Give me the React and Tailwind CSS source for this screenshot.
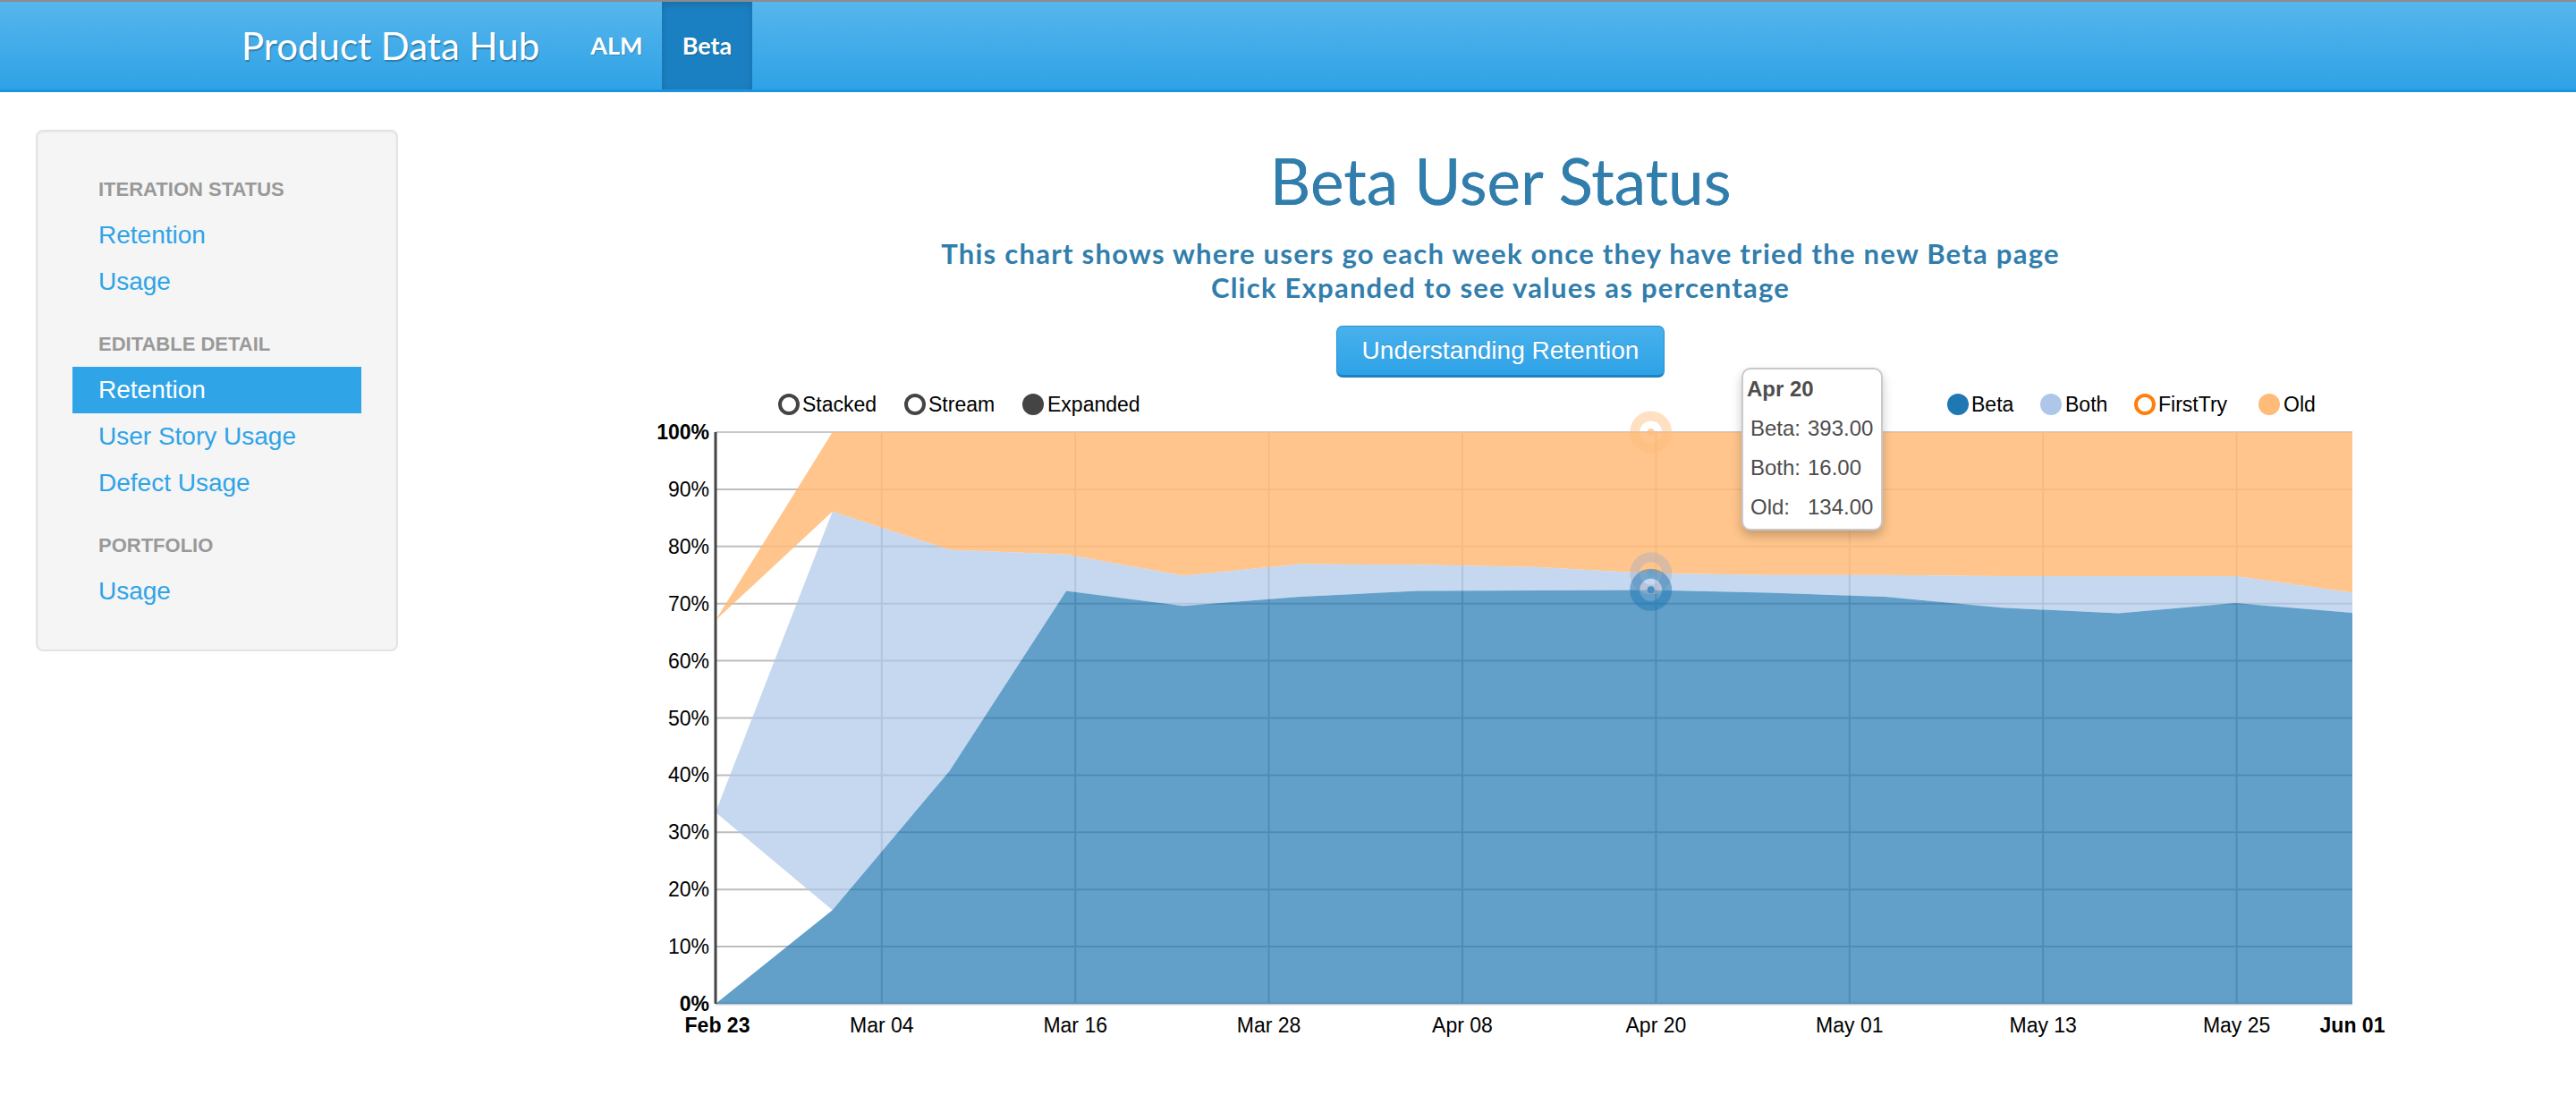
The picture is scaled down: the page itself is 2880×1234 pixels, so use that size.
import React from "react";

const X0 = 100;
const STEP = 130.714;
const xs = (i) => X0 + i * STEP;
const yy = (p) => 692 - p * 6.39;

const betaTop = [0, 16.4, 40.7, 72.2, 69.6, 71.2, 72.2, 72.3, 72.4, 71.9, 71.2, 69.3, 68.3, 70.1, 68.4];
const bothTop = [33.5, 86.1, 79.4, 78.6, 74.9, 76.9, 76.8, 76.4, 75.3, 75.0, 75.0, 74.8, 74.8, 74.8, 71.9];
const oldTop = [67.1, 100, 100, 100, 100, 100, 100, 100, 100, 100, 100, 100, 100, 100, 100];
const bothBottom = betaTop.map((v, i) => (i === 0 ? 33.5 : v));
const oldBottom = bothTop.map((v, i) => (i === 0 ? 67.1 : v));
const zeros = betaTop.map(() => 0);

function poly(top, bottom) {
  const pts = [];
  top.forEach((v, i) => pts.push(`${xs(i).toFixed(1)},${yy(v).toFixed(1)}`));
  for (let i = bottom.length - 1; i >= 0; i--) pts.push(`${xs(i).toFixed(1)},${yy(bottom[i]).toFixed(1)}`);
  return pts.join(" ");
}

const ticks = [
  ["Mar 04", 285.8],
  ["Mar 16", 502.2],
  ["Mar 28", 718.6],
  ["Apr 08", 935],
  ["Apr 20", 1151.4],
  ["May 01", 1367.8],
  ["May 13", 1584.2],
  ["May 25", 1800.6],
];

const FONT = "'Liberation Sans', Arial, sans-serif";

function Chart() {
  const hx = xs(8);
  return (
    <div className="relative ml-[225px] mt-[8px] w-[2000px] h-[760px]">
      <svg width="2000" height="760" viewBox="0 0 2000 760" style={{ fontFamily: FONT }}>
        {[10, 20, 30, 40, 50, 60, 70, 80, 90].map((p) => (
          <line key={p} x1={X0} x2={1930} y1={yy(p)} y2={yy(p)} stroke="#bdbdbd" strokeWidth="2" />
        ))}
        {ticks.map(([t, x]) => (
          <line key={t} x1={x} x2={x} y1={yy(100)} y2={yy(0)} stroke="#bdbdbd" strokeWidth="2" />
        ))}
        <line x1={X0} x2={1930} y1={yy(100)} y2={yy(100)} stroke="#c8c8c8" strokeWidth="2" />
        <line x1={X0} x2={1930} y1={yy(0)} y2={yy(0)} stroke="#c8c8c8" strokeWidth="3" />
        <polygon points={poly(oldTop, oldBottom)} fill="#ffbb78" fillOpacity="0.85" />
        <polygon points={poly(bothTop, bothBottom)} fill="#aec7e8" fillOpacity="0.7" />
        <polygon points={poly(betaTop, zeros)} fill="#1f77b4" fillOpacity="0.7" />
        <line x1={X0} x2={X0} y1={yy(100)} y2={yy(0)} stroke="#444" strokeWidth="3" />
        {[0, 10, 20, 30, 40, 50, 60, 70, 80, 90, 100].map((p) => (
          <text
            key={p}
            x={93}
            y={yy(p)}
            textAnchor="end"
            dominantBaseline="central"
            fontSize="23"
            fontWeight={p === 0 || p === 100 ? "bold" : "normal"}
            fill="#000"
          >
            {p}%
          </text>
        ))}
        <text x={X0 + 2} y={716} textAnchor="middle" dominantBaseline="central" fontSize="23" fontWeight="bold" fill="#000">
          Feb 23
        </text>
        {ticks.map(([t, x]) => (
          <text key={t} x={x} y={716} textAnchor="middle" dominantBaseline="central" fontSize="23" fill="#000">
            {t}
          </text>
        ))}
        <text x={1930} y={716} textAnchor="middle" dominantBaseline="central" fontSize="23" fontWeight="bold" fill="#000">
          Jun 01
        </text>
        <circle cx={hx} cy={yy(100)} r="18" fill="none" stroke="#ffbb78" strokeWidth="11" strokeOpacity="0.45" />
        <circle cx={hx} cy={yy(100)} r="4" fill="#ffbb78" fillOpacity="0.7" />
        <circle cx={hx} cy={yy(75.3)} r="18" fill="none" stroke="#aab0c0" strokeWidth="11" strokeOpacity="0.45" />
        <circle cx={hx} cy={yy(75.3)} r="4" fill="#aec7e8" fillOpacity="0.8" />
        <circle cx={hx} cy={yy(72.4)} r="18" fill="none" stroke="#1f77b4" strokeWidth="11" strokeOpacity="0.5" />
        <circle cx={hx} cy={yy(72.4)} r="4" fill="#4a8fc4" />
        <g fontSize="23" fill="#000">
          <circle cx={182} cy={22} r="10" fill="#fff" stroke="#444" strokeWidth="4" />
          <text x={197} y={22} dominantBaseline="central">Stacked</text>
          <circle cx={323} cy={22} r="10" fill="#fff" stroke="#444" strokeWidth="4" />
          <text x={338} y={22} dominantBaseline="central">Stream</text>
          <circle cx={455} cy={22} r="12" fill="#444" />
          <text x={471} y={22} dominantBaseline="central">Expanded</text>
        </g>
        <g fontSize="23" fill="#000">
          <circle cx={1489} cy={22} r="12" fill="#1f77b4" />
          <text x={1504} y={22} dominantBaseline="central">Beta</text>
          <circle cx={1593} cy={22} r="12" fill="#aec7e8" />
          <text x={1609} y={22} dominantBaseline="central">Both</text>
          <circle cx={1698} cy={22} r="10" fill="#fff" stroke="#ff7f0e" strokeWidth="4" />
          <text x={1713} y={22} dominantBaseline="central">FirstTry</text>
          <circle cx={1837} cy={22} r="12" fill="#ffbb78" />
          <text x={1853} y={22} dominantBaseline="central">Old</text>
        </g>
      </svg>
      <div
        className="absolute left-[1247px] top-[-19px] w-[158px] rounded-[10px] border-2 border-[#c9c9c9] bg-white text-[#4d4d4d] text-[24px] shadow-[0_6px_12px_rgba(0,0,0,0.22)]"
        style={{ fontFamily: FONT }}
      >
        <div className="h-[44px] leading-[44px] pl-[4px] font-bold">Apr 20</div>
        <div className="flex h-[44px] items-center pl-[8px]">
          <span className="w-[64px]">Beta:</span>
          <span>393.00</span>
        </div>
        <div className="flex h-[44px] items-center pl-[8px]">
          <span className="w-[64px]">Both:</span>
          <span>16.00</span>
        </div>
        <div className="flex h-[44px] items-center pl-[8px] mb-[2px]">
          <span className="w-[64px]">Old:</span>
          <span>134.00</span>
        </div>
      </div>
    </div>
  );
}

function SideHeader({ children }) {
  return (
    <div className="h-[52px] flex items-center pl-[29px] text-[22px] font-bold uppercase text-[#999999]">
      {children}
    </div>
  );
}

function SideLink({ children, active }) {
  return (
    <div
      className={
        "h-[52px] flex items-center pl-[29px] text-[28px] " +
        (active ? "bg-[#2fa4e7] text-white" : "text-[#2fa4e7]")
      }
    >
      {children}
    </div>
  );
}

export default function App() {
  const HEAD = "Lato, 'Open Sans', sans-serif";
  return (
    <div className="min-h-[1234px] bg-white" style={{ fontFamily: FONT }}>
      <div className="h-[103px] border-t-2 border-[#8c8c8c] border-b-[3px] border-b-[#1d93dc] bg-[linear-gradient(#56b6ec,#2ea2e6)] flex items-stretch pl-[270px]">
        <div
          className="w-[361px] flex items-center text-white text-[42px] [text-shadow:1px_2px_1px_rgba(0,0,0,0.25)]"
          style={{ fontFamily: HEAD }}
        >
          Product Data Hub
        </div>
        <div
          className="w-[109px] flex items-center justify-center pl-[8px] text-white text-[27px] font-bold [text-shadow:1px_1px_1px_rgba(0,0,0,0.2)]"
          style={{ fontFamily: HEAD }}
        >
          ALM
        </div>
        <div
          className="w-[101px] flex items-center justify-center bg-[#1b80c2] text-white text-[27px] font-bold [text-shadow:1px_1px_1px_rgba(0,0,0,0.2)] shadow-[inset_0_3px_8px_rgba(0,0,0,0.15)]"
          style={{ fontFamily: HEAD }}
        >
          Beta
        </div>
      </div>

      <div className="flex pl-[40px]">
        <div className="w-[405px] mt-[42px] self-start rounded-[8px] border-2 border-[#e3e3e3] bg-[#f5f5f5] shadow-[inset_0_1px_2px_rgba(0,0,0,0.05)] px-[39px] pt-[38px] pb-[39px]">
          <SideHeader>Iteration Status</SideHeader>
          <SideLink>Retention</SideLink>
          <SideLink>Usage</SideLink>
          <div className="h-[17px]" />
          <SideHeader>Editable Detail</SideHeader>
          <SideLink active>Retention</SideLink>
          <SideLink>User Story Usage</SideLink>
          <SideLink>Defect Usage</SideLink>
          <div className="h-[17px]" />
          <SideHeader>Portfolio</SideHeader>
          <SideLink>Usage</SideLink>
        </div>

        <div className="flex-1 ml-[30px] pt-[59px] flex flex-col">
          <div className="flex flex-col items-center text-[#317eac]" style={{ fontFamily: HEAD }}>
            <div className="h-[80px] leading-[80px] text-[71px] [text-shadow:0_0_0.6px_#317eac]">Beta User Status</div>
            <div className="mt-[22px] text-[31px] leading-[38px] font-bold tracking-[1.25px] text-center">
              <div>This chart shows where users go each week once they have tried the new Beta page</div>
              <div>Click Expanded to see values as percentage</div>
            </div>
            <button
              className="mt-[24px] h-[58px] w-[367px] rounded-[7px] border border-[#2a8fcf] border-b-[3px] border-b-[#1f82bf] bg-[linear-gradient(#48b1ed,#2ea2e6)] text-white text-[28px] [text-shadow:0_-1px_0_rgba(0,0,0,0.15)]"
              style={{ fontFamily: FONT }}
            >
              Understanding Retention
            </button>
          </div>
          <Chart />
        </div>
      </div>
    </div>
  );
}
